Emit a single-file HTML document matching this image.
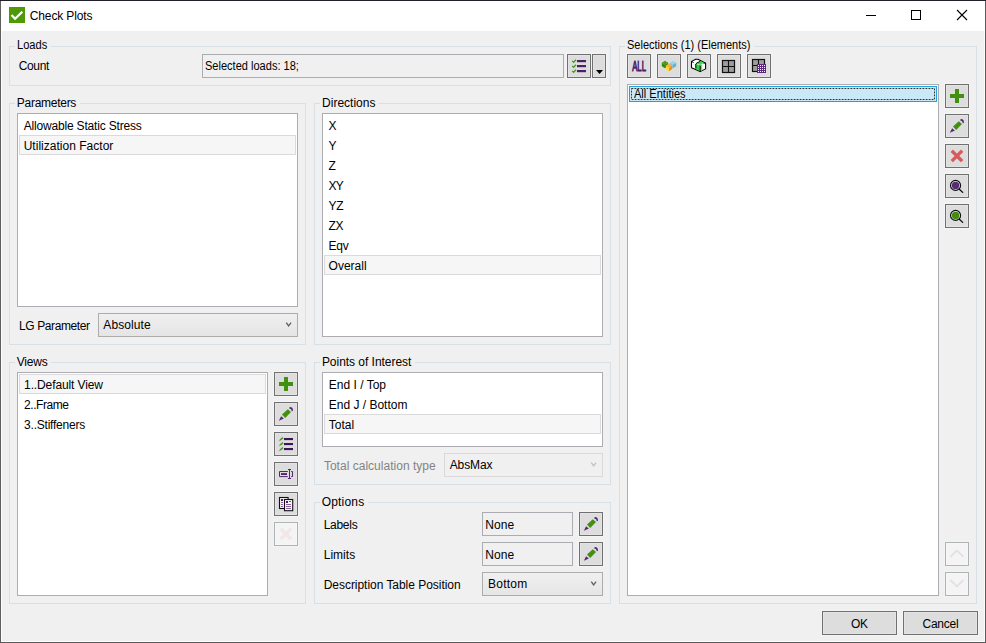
<!DOCTYPE html>
<html lang="en"><head><meta charset="utf-8"><title>Check Plots</title>
<style>
html,body{margin:0;padding:0}
body{width:986px;height:643px;position:relative;overflow:hidden;background:#f0f0f0;font:12px/14px "Liberation Sans",sans-serif}
body *{position:absolute;box-sizing:border-box}
.t{white-space:pre;height:14px;line-height:14px;font-size:12px;transform-origin:0 0}
.gbm{border:1px solid #d7e0e7}
.gbh{background:#f0f0f0}
.lb{background:#fff;border:1px solid #abadb3}
.sel{background:#f6f6f6;border:1px solid #dadada}
.btn{background:#ddd;border:1px solid #707070;box-shadow:0 0 0 1px #f5f5f5,inset 0 0 0 1px #e4e4e4}
.btn.dis{background:#f4f4f4;border-color:#adb2b5;box-shadow:0 0 0 1px #f3f3f3,inset 0 0 0 1px #f7f7f7}
.btn svg{left:3px;top:3px;width:16px;height:16px;overflow:visible}
.tb{background:#f0f0f0;border:1px solid #abadb3}
.cb{border:1px solid #acacac;background:linear-gradient(#f0f0f0,#e5e5e5)}
.cb.dis{border-color:#d9d9d9;background:#f0f0f0}
#titlebar{left:1px;top:1px;width:984px;height:30px;background:#fff}
</style></head>
<body>
<div id="titlebar"></div>
<div style="left:1px;top:31px;width:1px;height:611px;background:#fcfcfc"></div>
<div style="left:984px;top:31px;width:1px;height:611px;background:#fcfcfc"></div>
<div style="left:1px;top:641px;width:984px;height:1px;background:#fcfcfc"></div>
<div style="left:0;top:0;width:1px;height:643px;background:#5e5e5e"></div>
<div style="left:985px;top:0;width:1px;height:643px;background:#5a5a5a"></div>
<div style="left:0;top:642px;width:986px;height:1px;background:#5a5a5a"></div>
<div style="left:0;top:0;width:986px;height:1px;background:#20202a"></div>
<svg style="left:9px;top:7px;width:16px;height:16px" viewBox="0 0 16 16"><rect width="16" height="16" fill="#4e9a06"/><path d="M2.5 8 L6.1 11.7 L13.3 4.7" fill="none" stroke="#fff" stroke-width="2.3"/></svg>
<svg style="left:860px;top:5px;width:112px;height:20px" viewBox="860 5 112 20"><path d="M866 15.5h10" stroke="#000" stroke-width="1" fill="none"/><rect x="911.5" y="10.5" width="9" height="9" fill="none" stroke="#000" stroke-width="1"/><path d="M957 10l10 10M967 10l-10 10" stroke="#000" stroke-width="1.1" fill="none"/></svg>
<div class="gbm" style="left:9px;top:46px;width:602px;height:40px"></div>
<div class="gbh" style="left:15px;top:45px;width:36px;height:3px"></div>
<div class="gbm" style="left:9px;top:103px;width:297px;height:242px"></div>
<div class="gbh" style="left:15px;top:102px;width:65px;height:3px"></div>
<div class="gbm" style="left:314px;top:103px;width:297px;height:242px"></div>
<div class="gbh" style="left:320px;top:102px;width:59px;height:3px"></div>
<div class="gbm" style="left:9px;top:362px;width:297px;height:242px"></div>
<div class="gbh" style="left:15px;top:361px;width:36px;height:3px"></div>
<div class="gbm" style="left:314px;top:362px;width:297px;height:123px"></div>
<div class="gbh" style="left:320px;top:361px;width:95px;height:3px"></div>
<div class="gbm" style="left:314px;top:502px;width:297px;height:102px"></div>
<div class="gbh" style="left:320px;top:501px;width:48px;height:3px"></div>
<div class="gbm" style="left:619px;top:46px;width:358px;height:558px"></div>
<div class="gbh" style="left:625px;top:45px;width:129px;height:3px"></div>
<div class="lb" style="left:17px;top:113px;width:281px;height:194px"></div>
<div class="lb" style="left:322px;top:113px;width:281px;height:224px"></div>
<div class="lb" style="left:17px;top:372px;width:251px;height:224px"></div>
<div class="lb" style="left:322px;top:372px;width:281px;height:75px"></div>
<div class="lb" style="left:627px;top:84px;width:312px;height:512px"></div>
<div class="sel" style="left:19px;top:135px;width:277px;height:20px"></div>
<div class="sel" style="left:324px;top:255px;width:277px;height:20px"></div>
<div class="sel" style="left:19px;top:374px;width:247px;height:20px"></div>
<div class="sel" style="left:324px;top:414px;width:277px;height:20px"></div>
<div style="left:629px;top:86px;width:308px;height:16px;background:#cbe8f6;border:1px solid #26a0da"></div>
<svg style="left:631px;top:88px;width:304px;height:12px" viewBox="0 0 304 12"><rect x="0.5" y="0.5" width="303" height="11" fill="none" stroke="#333" stroke-width="1" stroke-dasharray="1.8 1.2"/></svg>
<div class="tb" style="left:202px;top:54px;width:362px;height:24px"></div>
<div class="tb" style="left:482px;top:512px;width:91px;height:24px"></div>
<div class="tb" style="left:482px;top:542px;width:91px;height:24px"></div>
<div class="cb" style="left:98px;top:313px;width:200px;height:24px"></div>
<svg style="left:284px;top:320px;width:10px;height:9px" viewBox="0 0 10 9"><path d="M2.3 2.7L4.6 5.9L7.1 2.7" fill="none" stroke="#5c5c5c" stroke-width="1.25"/></svg>
<div class="cb dis" style="left:444px;top:453px;width:159px;height:24px"></div>
<svg style="left:589px;top:460px;width:10px;height:9px" viewBox="0 0 10 9"><path d="M2.3 2.7L4.6 5.9L7.1 2.7" fill="none" stroke="#bfbfbf" stroke-width="1.25"/></svg>
<div class="cb" style="left:482px;top:572px;width:121px;height:24px"></div>
<svg style="left:589px;top:579px;width:10px;height:9px" viewBox="0 0 10 9"><path d="M2.3 2.7L4.6 5.9L7.1 2.7" fill="none" stroke="#5c5c5c" stroke-width="1.25"/></svg>
<div class="btn" style="left:567px;top:54px;width:24px;height:24px"><svg viewBox="0 0 16 16" ><rect x="6" y="2" width="9" height="2.2" fill="#4b2067"/><path d="M1.2 2.9L2.6 4.3L5 1.7" fill="none" stroke="#4a9a1f" stroke-width="1.3"/><rect x="6" y="7" width="9" height="2.2" fill="#4b2067"/><path d="M1.2 7.9L2.6 9.3L5 6.7" fill="none" stroke="#4a9a1f" stroke-width="1.3"/><rect x="6" y="12" width="9" height="2.2" fill="#4b2067"/><path d="M1.2 12.9L2.6 14.3L5 11.7" fill="none" stroke="#4a9a1f" stroke-width="1.3"/></svg></div>
<div class="btn" style="left:592px;top:54px;width:14px;height:24px"><svg viewBox="0 0 8 16" style="left:3px;top:3px;width:8px;height:16px"><path d="M0 12H7L3.5 16Z" fill="#000"/></svg></div>
<div class="btn" style="left:627px;top:54px;width:24px;height:24px"><svg viewBox="0 0 16 16" ><text x="1.2" y="13" font-family="Liberation Sans, sans-serif" font-size="14" textLength="13.8" lengthAdjust="spacingAndGlyphs" fill="#4b2067" stroke="#4b2067" stroke-width="0.9" vector-effect="non-scaling-stroke">ALL</text></svg></div>
<div class="btn" style="left:657px;top:54px;width:24px;height:24px"><svg viewBox="0 0 16 16" ><path d="M4 2.8L7.2 4.65L4 6.5L0.7999999999999998 4.65Z" fill="#4c9a16"/><path d="M0.7999999999999998 4.65L4 6.5L4 10.2L0.7999999999999998 8.35Z" fill="#3a8a0a"/><path d="M7.2 4.65L4 6.5L4 10.2L7.2 8.35Z" fill="#357f08"/><path d="M12 2.8L15.2 4.65L12 6.5L8.8 4.65Z" fill="#9ad6ea"/><path d="M8.8 4.65L12 6.5L12 10.2L8.8 8.35Z" fill="#7cc7e2"/><path d="M15.2 4.65L12 6.5L12 10.2L15.2 8.35Z" fill="#5fb5d6"/><path d="M8 5.6L11.2 7.5L8 9.399999999999999L4.8 7.5Z" fill="#ffb13a"/><path d="M4.8 7.5L8 9.399999999999999L8 13.2L4.8 11.299999999999999Z" fill="#ffd92e"/><path d="M11.2 7.5L8 9.399999999999999L8 13.2L11.2 11.299999999999999Z" fill="#ff8a1c"/></svg></div>
<div class="btn" style="left:687px;top:54px;width:24px;height:24px"><svg viewBox="0 0 16 16" ><path d="M0.5 3.4L4.8 1.3H7L14.6 5.1V10.9L9.2 13.6L0.5 9.8Z" fill="#fff" stroke="#000" stroke-width="1.05" stroke-linejoin="round"/><path d="M4.8 6L9.2 7.3V13L4.8 11Z" fill="#2fd43b"/><path d="M9.2 7.3L11.2 6.5V12.2L9.2 13.2Z" fill="#62e862"/><path d="M5.4 5.3L9.4 3.3L12.8 5.1L9.2 7.1Z" fill="#35e23f"/><path d="M0.5 3.4L2.6 4.6M4.8 10.6V6L6 4.9L9.4 3.3M12.4 5.1H14.6M9.2 7.6V13.6" fill="none" stroke="#000" stroke-width="1"/></svg></div>
<div class="btn" style="left:717px;top:54px;width:24px;height:24px"><svg viewBox="0 0 16 16" ><rect x="1.5" y="2.5" width="12" height="12" fill="#9d9d9d" stroke="#111" stroke-width="1.2"/><path d="M7.5 2.5v12M1.5 8.5h12" stroke="#111" stroke-width="1.1"/></svg></div>
<div class="btn" style="left:747px;top:54px;width:24px;height:24px"><svg viewBox="0 0 16 16" ><rect x="1.5" y="1.5" width="12" height="12" fill="#9d9d9d" stroke="#111" stroke-width="1.2"/><path d="M7.5 1.5v12M1.5 7.5h12" stroke="#111" stroke-width="1.1"/><rect x="6" y="6" width="9" height="9" fill="#5a2878"/><rect x="7" y="7" width="1" height="1" fill="#fff"/><rect x="7" y="9" width="1" height="1" fill="#fff"/><rect x="7" y="11" width="1" height="1" fill="#fff"/><rect x="7" y="13" width="1" height="1" fill="#fff"/><rect x="9" y="7" width="1" height="1" fill="#fff"/><rect x="9" y="9" width="1" height="1" fill="#fff"/><rect x="9" y="11" width="1" height="1" fill="#fff"/><rect x="9" y="13" width="1" height="1" fill="#fff"/><rect x="11" y="7" width="1" height="1" fill="#fff"/><rect x="11" y="9" width="1" height="1" fill="#fff"/><rect x="11" y="11" width="1" height="1" fill="#fff"/><rect x="11" y="13" width="1" height="1" fill="#fff"/><rect x="13" y="7" width="1" height="1" fill="#fff"/><rect x="13" y="9" width="1" height="1" fill="#fff"/><rect x="13" y="11" width="1" height="1" fill="#fff"/><rect x="13" y="13" width="1" height="1" fill="#fff"/></svg></div>
<div class="btn" style="left:945px;top:84px;width:24px;height:24px"><svg viewBox="0 0 16 16" ><path d="M1 6h14v4H1zM6 1h4v14H6z" fill="#42900f"/></svg></div>
<div class="btn" style="left:945px;top:114px;width:24px;height:24px"><svg viewBox="0 0 16 16" ><path d="M0.9 14.7L3.1 10.2L5.9 12.4Z" fill="#552672"/><path d="M4 8.5L9.8 3.3L13 6.1L7.2 11.9Z" fill="#42900f"/><path d="M11 2.3Q11.6 0.8 13.4 1.2Q15.2 2 15 4.8L13.9 5.2Q13.6 2.9 11 2.3Z" fill="#552672"/></svg></div>
<div class="btn" style="left:945px;top:144px;width:24px;height:24px"><svg viewBox="0 0 16 16" ><path d="M3.95 3.95L12 12M12 3.95L3.95 12" stroke="#d85a5d" stroke-width="3.3" stroke-linecap="square" fill="none"/></svg></div>
<div class="btn" style="left:945px;top:174px;width:24px;height:24px"><svg viewBox="0 0 16 16" ><circle cx="6.55" cy="7.4" r="5" fill="#e9e9e9" stroke="#0a0a0a" stroke-width="1.15"/><circle cx="6.55" cy="7.4" r="3.7" fill="#542d74"/><path d="M10.3 11.2L13.7 14.4" stroke="#0a0a0a" stroke-width="1.3" stroke-linecap="round"/></svg></div>
<div class="btn" style="left:945px;top:204px;width:24px;height:24px"><svg viewBox="0 0 16 16" ><circle cx="6.55" cy="7.4" r="5" fill="#e9e9e9" stroke="#0a0a0a" stroke-width="1.15"/><circle cx="6.55" cy="7.4" r="3.7" fill="#428a12"/><path d="M10.3 11.2L13.7 14.4" stroke="#0a0a0a" stroke-width="1.3" stroke-linecap="round"/></svg></div>
<div class="btn dis" style="left:945px;top:542px;width:24px;height:24px"><svg viewBox="0 0 16 16" ><path d="M1.4 10.7L7.9 4.6L14.4 10.7" fill="none" stroke="#e4e0e8" stroke-width="1.9"/></svg></div>
<div class="btn dis" style="left:945px;top:572px;width:24px;height:24px"><svg viewBox="0 0 16 16" ><path d="M1.4 4L7.9 10.5L14.4 4" fill="none" stroke="#e4e0e8" stroke-width="1.9"/></svg></div>
<div class="btn" style="left:274px;top:372px;width:24px;height:24px"><svg viewBox="0 0 16 16" ><path d="M1 6h14v4H1zM6 1h4v14H6z" fill="#42900f"/></svg></div>
<div class="btn" style="left:274px;top:402px;width:24px;height:24px"><svg viewBox="0 0 16 16" ><path d="M0.9 14.7L3.1 10.2L5.9 12.4Z" fill="#552672"/><path d="M4 8.5L9.8 3.3L13 6.1L7.2 11.9Z" fill="#42900f"/><path d="M11 2.3Q11.6 0.8 13.4 1.2Q15.2 2 15 4.8L13.9 5.2Q13.6 2.9 11 2.3Z" fill="#552672"/></svg></div>
<div class="btn" style="left:274px;top:432px;width:24px;height:24px"><svg viewBox="0 0 16 16" ><rect x="6" y="2" width="9" height="2.1" fill="#3d1556"/><path d="M2.1 4.1L5 1.6" stroke="#4a9a1f" stroke-width="1.5" fill="none"/><path d="M1 5L2.1 4.1" stroke="#b9a3c8" stroke-width="1.3" fill="none"/><rect x="6" y="7" width="9" height="2.1" fill="#3d1556"/><path d="M2.1 9.1L5 6.6" stroke="#4a9a1f" stroke-width="1.5" fill="none"/><path d="M1 10L2.1 9.1" stroke="#b9a3c8" stroke-width="1.3" fill="none"/><rect x="6" y="12" width="9" height="2.1" fill="#3d1556"/><path d="M2.1 14.1L5 11.6" stroke="#4a9a1f" stroke-width="1.5" fill="none"/><path d="M1 15L2.1 14.1" stroke="#b9a3c8" stroke-width="1.3" fill="none"/></svg></div>
<div class="btn" style="left:274px;top:462px;width:24px;height:24px"><svg viewBox="0 0 16 16" ><g fill="none" stroke="#54266f" stroke-width="1"><path d="M9.8 5.5H1.5V10.6H9.8"/><path d="M10 3.5h3M10 12.5h3M11.5 3.5v9"/><path d="M13.2 5.5H14.5V10.6H13.2"/></g><rect x="3" y="7.1" width="6" height="1.9" fill="#54266f"/></svg></div>
<div class="btn" style="left:274px;top:492px;width:24px;height:24px"><svg viewBox="0 0 16 16" ><rect x="1.5" y="1.5" width="8.6" height="11" fill="#f6f6f6" stroke="#111" stroke-width="1.1"/><rect x="3" y="3" width="2" height="2" fill="#4b1a6b"/><path d="M3 6.5h2M3 8.5h2M3 10.5h2" stroke="#7a4f98" stroke-width="0.9"/><rect x="6.5" y="3.5" width="8.2" height="11.2" fill="#f6f6f6" stroke="#111" stroke-width="1.1"/><rect x="8" y="5" width="2" height="2" fill="#4b1a6b"/><rect x="11" y="5" width="2" height="1" fill="#7a4f98"/><path d="M8 8.5h5M8 10.5h5M8 12.5h5" stroke="#7a4f98" stroke-width="0.9"/></svg></div>
<div class="btn dis" style="left:274px;top:522px;width:24px;height:24px"><svg viewBox="0 0 16 16" ><path d="M3.95 3.95L12 12M12 3.95L3.95 12" stroke="#f1e7e8" stroke-width="3.3" stroke-linecap="square" fill="none"/></svg></div>
<div class="btn" style="left:579px;top:512px;width:24px;height:24px"><svg viewBox="0 0 16 16" ><path d="M0.9 14.7L3.1 10.2L5.9 12.4Z" fill="#552672"/><path d="M4 8.5L9.8 3.3L13 6.1L7.2 11.9Z" fill="#42900f"/><path d="M11 2.3Q11.6 0.8 13.4 1.2Q15.2 2 15 4.8L13.9 5.2Q13.6 2.9 11 2.3Z" fill="#552672"/></svg></div>
<div class="btn" style="left:579px;top:542px;width:24px;height:24px"><svg viewBox="0 0 16 16" ><path d="M0.9 14.7L3.1 10.2L5.9 12.4Z" fill="#552672"/><path d="M4 8.5L9.8 3.3L13 6.1L7.2 11.9Z" fill="#42900f"/><path d="M11 2.3Q11.6 0.8 13.4 1.2Q15.2 2 15 4.8L13.9 5.2Q13.6 2.9 11 2.3Z" fill="#552672"/></svg></div>
<div class="btn" style="left:822px;top:611px;width:75px;height:24px"></div>
<div class="btn" style="left:903px;top:611px;width:75px;height:24px"></div>
<span class="t" style="left:29.8px;top:9px;color:#000;letter-spacing:-0.139px;">Check Plots</span>
<span class="t" style="left:16.8px;top:38px;color:#000;transform:scaleX(0.9235);">Loads</span>
<span class="t" style="left:18.7px;top:59px;color:#000;letter-spacing:-0.346px;">Count</span>
<span class="t" style="left:205.0px;top:59px;color:#000;transform:scaleX(0.9199);">Selected loads: 18;</span>
<span class="t" style="left:16.8px;top:96px;color:#000;letter-spacing:-0.273px;">Parameters</span>
<span class="t" style="left:23.7px;top:119px;color:#000;letter-spacing:-0.177px;">Allowable Static Stress</span>
<span class="t" style="left:23.7px;top:139px;color:#000;letter-spacing:0.018px;">Utilization Factor</span>
<span class="t" style="left:19.1px;top:319px;color:#000;letter-spacing:-0.406px;">LG Parameter</span>
<span class="t" style="left:103.3px;top:318px;color:#000;letter-spacing:0.087px;">Absolute</span>
<span class="t" style="left:322.1px;top:96px;color:#000;letter-spacing:-0.006px;">Directions</span>
<span class="t" style="left:328.6px;top:119px;color:#000;letter-spacing:-0.116px;">X</span>
<span class="t" style="left:328.6px;top:139px;color:#000;letter-spacing:-0.616px;">Y</span>
<span class="t" style="left:328.6px;top:159px;color:#000;letter-spacing:0.256px;">Z</span>
<span class="t" style="left:328.6px;top:179px;color:#000;letter-spacing:-0.808px;">XY</span>
<span class="t" style="left:328.6px;top:199px;color:#000;letter-spacing:-0.472px;">YZ</span>
<span class="t" style="left:328.6px;top:219px;color:#000;letter-spacing:-0.372px;">ZX</span>
<span class="t" style="left:328.6px;top:239px;color:#000;letter-spacing:-0.296px;">Eqv</span>
<span class="t" style="left:328.6px;top:259px;color:#000;letter-spacing:-0.002px;">Overall</span>
<span class="t" style="left:16.8px;top:355px;color:#000;letter-spacing:-0.239px;">Views</span>
<span class="t" style="left:24.1px;top:378px;color:#000;letter-spacing:-0.120px;">1..Default View</span>
<span class="t" style="left:24.1px;top:398px;color:#000;letter-spacing:-0.464px;">2..Frame</span>
<span class="t" style="left:24.1px;top:418px;color:#000;letter-spacing:-0.225px;">3..Stiffeners</span>
<span class="t" style="left:321.9px;top:355px;color:#000;letter-spacing:-0.030px;">Points of Interest</span>
<span class="t" style="left:328.8px;top:378px;color:#000;letter-spacing:0.004px;">End I / Top</span>
<span class="t" style="left:328.8px;top:398px;color:#000;letter-spacing:-0.007px;">End J / Bottom</span>
<span class="t" style="left:328.8px;top:418px;color:#000;letter-spacing:-0.012px;">Total</span>
<span class="t" style="left:323.9px;top:459px;color:#838383;letter-spacing:0.018px;">Total calculation type</span>
<span class="t" style="left:449.7px;top:458px;color:#000;letter-spacing:-0.110px;">AbsMax</span>
<span class="t" style="left:321.7px;top:495px;color:#000;letter-spacing:0.192px;">Options</span>
<span class="t" style="left:323.7px;top:518px;color:#000;letter-spacing:-0.279px;">Labels</span>
<span class="t" style="left:323.7px;top:548px;color:#000;letter-spacing:0.026px;">Limits</span>
<span class="t" style="left:323.7px;top:578px;color:#000;letter-spacing:-0.037px;">Description Table Position</span>
<span class="t" style="left:485.2px;top:518px;color:#000;letter-spacing:0.128px;">None</span>
<span class="t" style="left:485.2px;top:548px;color:#000;letter-spacing:0.128px;">None</span>
<span class="t" style="left:488.1px;top:577px;color:#000;letter-spacing:0.214px;">Bottom</span>
<span class="t" style="left:626.7px;top:38px;color:#000;transform:scaleX(0.9160);">Selections (1) (Elements)</span>
<span class="t" style="left:634.2px;top:87px;color:#000;transform:scaleX(0.9209);">All Entities</span>
<span class="t" style="left:851.0px;top:617px;color:#000;letter-spacing:-0.322px;">OK</span>
<span class="t" style="left:922.5px;top:617px;color:#000;letter-spacing:-0.243px;">Cancel</span>
</body></html>
